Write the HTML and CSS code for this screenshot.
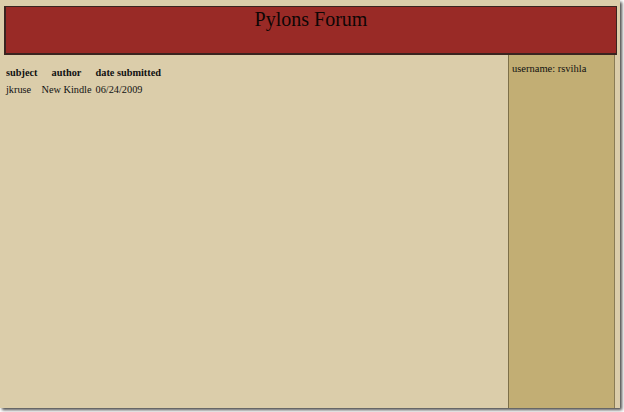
FILE: index.html
```html
<!DOCTYPE html>
<html>
<head>
<meta charset="utf-8">
<link rel="stylesheet" href="styles.css">
</head>
<body>
<div class="frame">
  <div class="header"><h1 class="title">Pylons Forum</h1></div>
  <div class="content">
    <div class="main">
      <table class="posts">
        <tr><th>subject</th><th>author</th><th>date submitted</th></tr>
        <tr><td>jkruse</td><td>New Kindle</td><td>06/24/2009</td></tr>
      </table>
    </div>
    <div class="sidebar">username: rsvihla</div>
  </div>
</div>
</body>
</html>
```

FILE: styles.css
```css
html, body {
  margin: 0;
  padding: 0;
  background: #ffffff;
}
body {
  width: 624px;
  height: 412px;
  overflow: hidden;
  font-family: "Liberation Serif", "Times New Roman", serif;
  color: #111;
}
.frame {
  width: 620px;
  height: 408px;
  box-sizing: border-box;
  background: #dbcdaa;
  box-shadow: 2px 2px 3px #4a4a4a;
  padding: 6px 3px 0 4px;
  display: flex;
  flex-direction: column;
}
.header {
  height: 49px;
  box-sizing: border-box;
  background: #992a26;
  border: 1px solid #3a2420;
  border-left-width: 2px;
  border-bottom-width: 2px;
  flex: none;
}
.title {
  margin: 0;
  padding-top: 1px;
  font-size: 20px;
  font-weight: normal;
  text-align: center;
  color: #0d0605;
}
.content {
  flex: 1;
  display: flex;
  min-height: 0;
}
.main {
  flex: 1;
  padding-top: 9px;
}
.posts {
  border-spacing: 2px 3px;
  margin-left: -1px;
  margin-top: -1px;
  font-size: 10.3px;
}
.posts th, .posts td {
  padding: 1px;
  line-height: 12px;
}
.posts th {
  font-weight: bold;
}
.posts td {
  text-align: left;
}
.sidebar {
  width: 107px;
  margin-right: 2px;
  box-sizing: border-box;
  background: #c2ae74;
  border-left: 1px solid #7d6f48;
  border-right: 1px solid #8a7c55;
  padding: 8px 3px 0 3px;
  font-size: 10.5px;
  line-height: 12px;
}
```
